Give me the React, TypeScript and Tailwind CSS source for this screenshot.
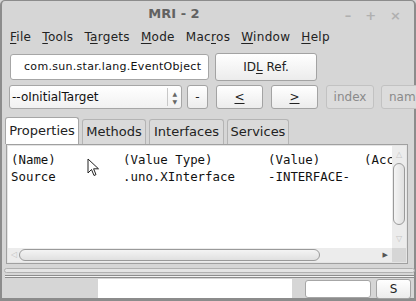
import React from "react";

const ui = "font-['DejaVu_Sans','Liberation_Sans',sans-serif]";
const mono = "font-['DejaVu_Sans_Mono','Liberation_Mono',monospace]";

const btn =
  "flex shrink-0 items-center justify-center rounded-[3px] border border-[#a3a3a3] bg-gradient-to-b from-white to-[#ececec] text-[12px] text-[#222]";

function Btn({ className, children }: { className: string; children: React.ReactNode }) {
  return <div className={`${btn} ${className}`}>{children}</div>;
}

function Cursor() {
  return (
    <svg className="absolute left-[87px] top-[158px]" width="14" height="20" viewBox="0 0 14 20">
      <path d="M1 1 L1 15 L4.5 11.5 L7 17.5 L9 16.6 L6.6 10.8 L11.5 10.8 Z" fill="#fff" stroke="#222" strokeWidth="1" strokeLinejoin="round" />
    </svg>
  );
}

export default function App() {
  const menus: [string, string, string][] = [
    ["", "F", "ile"],
    ["", "T", "ools"],
    ["T", "a", "rgets"],
    ["", "M", "ode"],
    ["Mac", "r", "os"],
    ["", "W", "indow"],
    ["", "H", "elp"],
  ];

  return (
    <div className={`relative h-[301px] w-[416px] overflow-hidden bg-[#d6d6d6] ${ui}`}>
      <div className="flex h-full w-full flex-col rounded-t-[5px] border border-[#8c8c8c] border-b-[3px] border-l-2 border-r-2">
        {/* title bar */}
        <div className="relative flex h-[25px] items-center justify-center pr-[68px]">
          <span className="text-[13px] font-bold text-[#626262]">MRI - 2</span>
          <div className="absolute right-[13px] top-[5px] flex gap-[14px] text-[13px] font-bold text-[#b0b0b0]">
            <span>–</span>
            <span>+</span>
            <span>×</span>
          </div>
        </div>

        {/* menu */}
        <div className="flex h-[22px] items-center gap-[11px] pl-[8px] text-[12px] tracking-[0.3px] text-[#222]">
          {menus.map(([a, u, b]) => (
            <span key={a + u + b}>
              {a}
              <span className="underline underline-offset-2">{u}</span>
              {b}
            </span>
          ))}
        </div>

        {/* row 1 */}
        <div className="mt-[5px] flex h-[28px] items-center gap-[6px] pl-[8px]">
          <div className="flex h-[26px] w-[199px] shrink-0 items-center rounded-[3px] border border-[#a6a6a6] bg-white pl-[13px] text-[11px] tracking-[0.3px] text-[#111]">
            com.sun.star.lang.EventObject
          </div>
          <Btn className="h-[28px] w-[102px]">
            ID<span className="underline underline-offset-2">L</span>&nbsp;Ref.
          </Btn>
        </div>

        {/* row 2 */}
        <div className="mt-[4px] flex h-[24px] items-center pl-[7px]">
          <div className="flex h-[24px] w-[173px] shrink-0 items-center justify-between rounded-[3px] border border-[#a6a6a6] bg-gradient-to-b from-white to-[#f1f1f1] pl-[2px] text-[12px] text-[#111]">
            <span>--oInitialTarget</span>
            <div className="flex h-[18px] items-center border-l border-[#c8c8c8] px-[4px]">
              <div className="flex flex-col items-center gap-[1px] text-[6px] leading-[7px] text-[#666]">
                <span>▲</span>
                <span>▼</span>
              </div>
            </div>
          </div>
          <Btn className="ml-[5px] h-[24px] w-[21px]">-</Btn>
          <Btn className="ml-[8px] h-[24px] w-[47px]">
            <span className="underline underline-offset-2">&lt;</span>
          </Btn>
          <Btn className="ml-[8px] h-[24px] w-[47px]">
            <span className="underline underline-offset-2">&gt;</span>
          </Btn>
          <div className="ml-[8px] flex h-[24px] w-[48px] shrink-0 items-center justify-center rounded-[3px] border border-[#c2c2c2] bg-[#dcdcdc] text-[12px] text-[#8a8a8a]">
            index
          </div>
          <div className="ml-[7px] flex h-[24px] w-[48px] shrink-0 items-center rounded-[3px] border border-[#c2c2c2] bg-[#dcdcdc] pl-[7px] text-[12px] text-[#8a8a8a]">
            name
          </div>
        </div>

        {/* tabs */}
        <div className="mt-[8px] flex h-[27px] items-end gap-[3px] pl-[3px] text-[13px] text-[#222]">
          <div className="flex h-[27px] w-[74px] items-center justify-center rounded-t-[3px] border border-b-0 border-[#a6a6a6] bg-white">
            Properties
          </div>
          <div className="flex h-[25px] w-[64px] items-center justify-center rounded-t-[3px] border border-b-0 border-[#b4b4b4] bg-[#dadada]">
            Methods
          </div>
          <div className="flex h-[25px] w-[75px] items-center justify-center rounded-t-[3px] border border-b-0 border-[#b4b4b4] bg-[#dadada]">
            Interfaces
          </div>
          <div className="flex h-[25px] w-[62px] items-center justify-center rounded-t-[3px] border border-b-0 border-[#b4b4b4] bg-[#dadada]">
            Services
          </div>
        </div>

        {/* content panel */}
        <div className="ml-[4px] mr-[6px] flex h-[120px] flex-col border border-[#a0a0a0] bg-[#e4e4e4] p-[1px]">
          <div className="flex min-h-0 flex-1">
            <div className={`min-w-0 flex-1 overflow-hidden bg-white pl-[3px] pt-[5px] text-[12.4px] leading-[17px] text-[#111] ${mono}`}>
              <div className="grid grid-cols-[112px_145px_96px_60px] whitespace-nowrap">
                <span>(Name)</span>
                <span>(Value Type)</span>
                <span>(Value)</span>
                <span>(Access)</span>
                <span>Source</span>
                <span>.uno.XInterface</span>
                <span>-INTERFACE-</span>
                <span></span>
              </div>
            </div>
            {/* vertical scrollbar */}
            <div className="flex w-[14px] shrink-0 flex-col items-center bg-[#ececec]">
              <span className="mt-[4px] text-[8px] leading-[10px] text-[#c4c4c4]">△</span>
              <div className="mt-[3px] h-[62px] w-[12px] rounded-full border border-[#9a9a9a] bg-gradient-to-r from-[#f4f4f4] to-[#e0e0e0]" />
              <span className="mt-auto mb-[4px] text-[8px] leading-[10px] text-[#c4c4c4]">▽</span>
            </div>
          </div>
          {/* horizontal scrollbar */}
          <div className="flex h-[14px] items-center bg-[#ececec]">
            <span className="ml-[3px] text-[8px] text-[#c4c4c4]">◁</span>
            <div className="ml-[2px] h-[12px] w-[301px] rounded-full border border-[#9a9a9a] bg-gradient-to-b from-[#f4f4f4] to-[#e0e0e0]" />
            <span className="ml-auto mr-[4px] text-[7px] text-[#555]">▶</span>
            <div className="h-[14px] w-[14px] bg-[#d6d6d6]" />
          </div>
        </div>

        {/* splitter */}
        <div className="ml-[2px] mr-[-1px] mt-[4px] h-[5px] rounded-full border border-[#b0b0b0] bg-[#e4e4e4]" />
        <div className="ml-[3px] mt-[2px] h-[3px] border-y border-[#8c8c8c] bg-[#f2f2f2]" />

        {/* status row */}
        <div className="mt-[1px] flex h-[19px] items-center">
          <div className="h-full w-[96px] bg-[#d6d6d6]" />
          <div className="h-full w-[194px] bg-white" />
          <div className="ml-[13px] h-[18px] w-[66px] rounded-[3px] border border-[#a6a6a6] bg-white" />
          <Btn className="ml-[5px] h-[20px] w-[35px]">S</Btn>
        </div>
      </div>
      <Cursor />
    </div>
  );
}
